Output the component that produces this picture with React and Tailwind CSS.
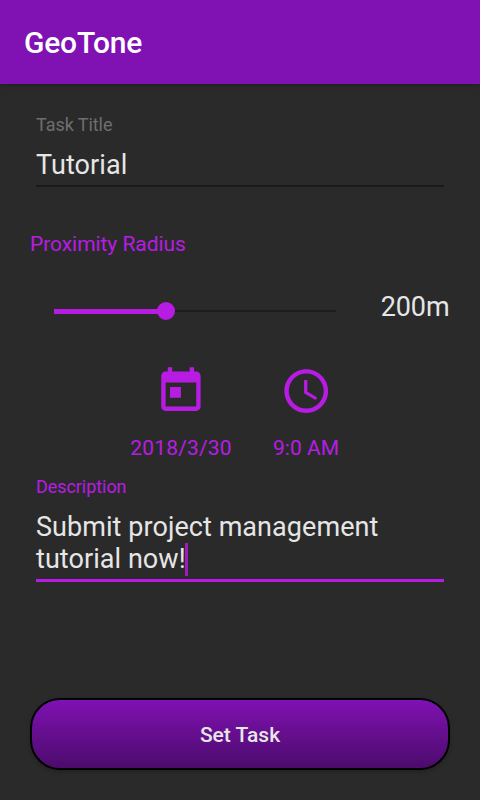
function TodayIcon() {
  return (
    <svg className="size-[52.5px]" viewBox="0.15 0 24 24" fill="currentColor">
      <path d="M19 3h-1V1h-2v2H8V1H6v2H5c-1.11 0-1.99.9-1.99 2L3 19c0 1.1.89 2 2 2h14c1.1 0 2-.9 2-2V5c0-1.1-.9-2-2-2zm0 16H5V8h14v11zM7 10h5v5H7z" />
    </svg>
  );
}

function ClockIcon() {
  return (
    <svg className="size-[52.5px]" viewBox="0 0.1 24 24" fill="currentColor">
      <path d="M11.99 2C6.47 2 2 6.48 2 12s4.47 10 9.99 10C17.52 22 22 17.52 22 12S17.52 2 11.99 2zM12 20c-4.42 0-8-3.58-8-8s3.58-8 8-8 8 3.58 8 8-3.58 8-8 8z" />
      <path d="M12.5 7H11v6l5.25 3.15.75-1.23-4.5-2.67z" />
    </svg>
  );
}

function RadiusSlider() {
  return (
    <div className="flex h-[18px] w-[282px] items-center">
      <div className="h-[5px] w-[104px] bg-[#b81ce4]" />
      <div className="-ml-px size-[18px] rounded-full bg-[#b81ce4]" />
      <div className="h-[2px] flex-1 bg-[#1d1d1d]" />
    </div>
  );
}

export default function App() {
  return (
    <div className="flex h-[800px] w-[480px] flex-col overflow-hidden bg-[#2a2a2a] font-['Roboto',sans-serif] text-[#e6e6e6]">
      <header className="flex h-[84px] shrink-0 items-center bg-[#8011b3] px-6 pt-0.5 shadow-[0_1px_4px_rgba(0,0,0,0.3)]">
        <h1 className="text-[30px] leading-9 font-medium tracking-[-0.2px] text-white">GeoTone</h1>
      </header>

      <main className="flex flex-1 flex-col px-[30px]">
        <section className="mx-1.5 mt-[30px] flex h-[73px] flex-col border-b-2 border-[#1a1a1a]">
          <label className="text-[18px] leading-[21px] tracking-[-0.06px] text-[#6e6e6e]">Task Title</label>
          <div className="mt-3.5 text-[27px] leading-8 tracking-[0.1px]">Tutorial</div>
        </section>

        <h2 className="mt-[45px] text-[21px] leading-[25px] tracking-[-0.06px] text-[#b81ce4]">Proximity Radius</h2>

        <div className="mt-[34px] flex h-8 items-center justify-between pr-[0.5px] pl-6">
          <div className="pt-2">
            <RadiusSlider />
          </div>
          <span className="text-[27px] leading-8 tracking-[-0.1px]">200m</span>
        </div>

        <div className="mt-[42px] flex pl-[100px] text-[21px] leading-[25px] text-[#b81ce4]">
          <div className="flex w-[102px] flex-col items-center gap-[18.5px]">
            <TodayIcon />
            <span className="tracking-[0.15px]">2018/3/30</span>
          </div>
          <div className="ml-[41px] flex w-[66px] flex-col items-center gap-[18.5px]">
            <ClockIcon />
            <span className="whitespace-nowrap">9:0 AM</span>
          </div>
        </div>

        <section className="mx-1.5 mt-[15px] flex h-[106px] flex-col border-b-3 border-[#b81ce4]">
          <label className="text-[18px] leading-[21px] tracking-[-0.06px] text-[#b81ce4]">Description</label>
          <div className="mt-3.5 text-[27px] leading-8 tracking-[0.06px]">
            <div>Submit project management</div>
            <div className="flex">
              tutorial now!
              <span className="-ml-px h-[33px] w-[3px] bg-[#9c1cc0]" />
            </div>
          </div>
        </section>

        <button className="mt-[116px] h-[72px] w-[420px] rounded-[30px] border-2 border-black bg-linear-to-b from-[#8011b3] to-[#4c0b6c] pt-0.5 text-[21px] leading-6 font-medium shadow-[0_2px_4px_rgba(0,0,0,0.2)]">
          Set Task
        </button>
      </main>
    </div>
  );
}
